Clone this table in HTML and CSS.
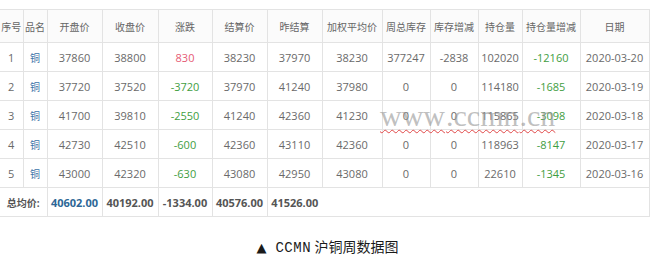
FILE: index.html
```html
<!DOCTYPE html>
<html lang="zh-CN">
<head>
<meta charset="utf-8">
<title>CCMN 沪铜周数据图</title>
<link rel="stylesheet" href="styles.css">
</head>
<body>
<div class="page">
  <div class="table-wrap">
    <table class="data">
      <colgroup>
        <col class="c1"><col class="c2"><col class="c3"><col class="c4"><col class="c5"><col class="c6"><col class="c7"><col class="c8"><col class="c9"><col class="c10"><col class="c11"><col class="c12"><col class="c13">
      </colgroup>
      <thead>
        <tr><th>序号</th><th>品名</th><th>开盘价</th><th>收盘价</th><th>涨跌</th><th>结算价</th><th>昨结算</th><th>加权平均价</th><th>周总库存</th><th>库存增减</th><th>持仓量</th><th>持仓量增减</th><th>日期</th></tr>
      </thead>
      <tbody>
        <tr><td>1</td><td class="name">铜</td><td>37860</td><td>38800</td><td class="up">830</td><td>38230</td><td>37970</td><td>38230</td><td>377247</td><td>-2838</td><td>102020</td><td class="down">-12160</td><td>2020-03-20</td></tr>
        <tr><td>2</td><td class="name">铜</td><td>37720</td><td>37520</td><td class="down">-3720</td><td>37970</td><td>41240</td><td>37980</td><td>0</td><td>0</td><td>114180</td><td class="down">-1685</td><td>2020-03-19</td></tr>
        <tr><td>3</td><td class="name">铜</td><td>41700</td><td>39810</td><td class="down">-2550</td><td>41240</td><td>42360</td><td>41230</td><td>0</td><td>0</td><td>115865</td><td class="down">-3098</td><td>2020-03-18</td></tr>
        <tr><td>4</td><td class="name">铜</td><td>42730</td><td>42510</td><td class="down">-600</td><td>42360</td><td>43110</td><td>42360</td><td>0</td><td>0</td><td>118963</td><td class="down">-8147</td><td>2020-03-17</td></tr>
        <tr><td>5</td><td class="name">铜</td><td>43000</td><td>42320</td><td class="down">-630</td><td>43080</td><td>42950</td><td>43080</td><td>0</td><td>0</td><td>22610</td><td class="down">-1345</td><td>2020-03-16</td></tr>
        <tr class="total"><td colspan="2" class="total-label">总均价:</td><td class="hl">40602.00</td><td>40192.00</td><td>-1334.00</td><td>40576.00</td><td>41526.00</td><td colspan="6" class="blank"></td></tr>
      </tbody>
    </table>
    <div class="watermark"><span class="wm">www</span><span class="wm">.ccmn</span><span class="wm">.cn</span></div>
  </div>
  <p class="caption"><span class="tri">▲</span><span class="latin">CCMN</span> 沪铜周数据图</p>
</div>
</body>
</html>
```
FILE: styles.css
```css
html, body {
  margin: 0;
  padding: 0;
  background: #ffffff;
}
.page {
  width: 655px;
  height: 263px;
  overflow: hidden;
  padding-top: 9px;
  box-sizing: border-box;
}
.table-wrap {
  position: relative;
  width: 649px;
}
.data {
  border-collapse: collapse;
  table-layout: fixed;
  width: 649px;
  font-family: "Open Sans", "Noto Sans CJK SC", sans-serif;
  font-size: 11px;
  color: #6a6a6a;
  border-right: 1px solid #e3e3e3;
  border-top: 1px solid #e3e3e3;
}
.c1 { width: 23px; }
.c2 { width: 24px; }
.c3 { width: 55px; }
.c4 { width: 56px; }
.c5 { width: 54px; }
.c6 { width: 55px; }
.c7 { width: 55px; }
.c8 { width: 60px; }
.c9 { width: 48px; }
.c10 { width: 48px; }
.c11 { width: 44px; }
.c12 { width: 58px; }
.c13 { width: 69px; }
.data th, .data td {
  padding: 0;
  text-align: center;
  white-space: nowrap;
  border-bottom: 1px solid #e3e3e3;
  border-left: 1px solid #e3e3e3;
}
.data tr > :first-child { border-left: none; }
.data th {
  height: 32px;
  font-weight: normal;
  font-size: 10px;
  background: #fbfbfb;
  color: #666666;
}
.data td {
  height: 28px;
}
.data .name {
  color: #3b72a8;
  font-size: 10px;
}
.data .up { color: #e65a74; }
.data .down { color: #3f9e3f; }
.total td {
  font-weight: bold;
  color: #555555;
}
.total .total-label {
  font-size: 10px;
  color: #555555;
}
.total .hl { color: #2d6796; }
.total .blank { border-left: none; }
.watermark {
  position: absolute;
  left: 380px;
  top: 92px;
  font-family: "Liberation Serif", serif;
  font-size: 30px;
  line-height: 30px;
  color: rgba(150, 150, 150, 0.6);
  white-space: nowrap;
  pointer-events: none;
}
.wm {
  display: inline-block;
  margin-right: 1px;
  text-decoration: underline wavy #e04848;
  text-decoration-thickness: 1px;
  text-underline-offset: 3px;
}
.caption {
  margin: 22px 0 0;
  text-align: center;
  font-family: "Liberation Serif", "Noto Sans CJK SC", serif;
  font-size: 14px;
  color: #1a1a1a;
  line-height: 18px;
}
.caption .latin {
  font-family: "Liberation Mono", monospace;
  font-size: 14px;
  letter-spacing: 0.5px;
}
.caption .tri {
  display: inline-block;
  margin-right: 9px;
  font-family: "DejaVu Sans", sans-serif;
  font-size: 13px;
}
```
